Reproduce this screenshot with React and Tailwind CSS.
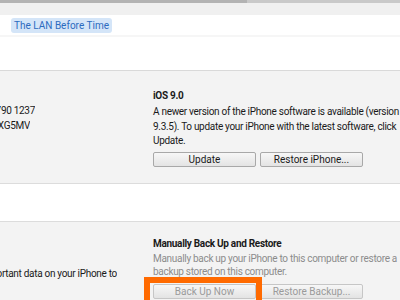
import React from "react";

const font = { fontFamily: 'Roboto, "Noto Sans", sans-serif' };

function Btn({ children, disabled }) {
  return (
    <button
      className={
        "h-[15px] w-[103px] shrink-0 rounded-[2px] border bg-gradient-to-b from-[#f7f7f7] to-[#e3e3e3] text-[10px] leading-[13px] " +
        (disabled ? "text-[#9a9a9a] border-[#c6c6c6]" : "text-[#1a1a1a] border-[#a8a8a8]")
      }
    >
      {children}
    </button>
  );
}

export default function App() {
  return (
    <div className="w-[400px] h-[300px] overflow-hidden bg-white text-[#1a1a1a] tracking-[-0.3px]" style={font}>
      <div className="flex h-[3px]">
        <div className="w-[247px] bg-[#b3b3b3]" />
        <div className="flex-1 bg-[#c9c9c9]" />
      </div>
      <div className="h-[12px] bg-[#f0f0f0]" />
      <div className="h-[20px] bg-white flex items-center pl-[11px]">
        <div className="h-[15px] w-[101px] text-center rounded-[3px] bg-[#d4e5f8] text-[#2c6bbf] text-[10px] leading-[15px] tracking-normal">
          The LAN Before Time
        </div>
      </div>
      <div className="h-[2px] bg-[#f6f6f6]" />
      <div className="h-[33px] bg-white" />

      <div className="h-[113px] border-t border-[#d9d9d9] bg-[#f3f3f3] flex">
        <div className="w-[153px] shrink-0 pt-[32px] text-[10px] leading-[15px] whitespace-nowrap">
          <div className="w-[35px] flex justify-end overflow-hidden">
            <span>6790 1237</span>
          </div>
          <div className="w-[30px] flex justify-end overflow-hidden">
            <span>DXG5MV</span>
          </div>
        </div>
        <div className="flex-1 min-w-0 pt-[17px]">
          <div className="text-[10px] leading-[15px] font-bold">iOS 9.0</div>
          <div className="mt-[2px] text-[10px] leading-[14.5px] whitespace-nowrap">
            <div>A newer version of the iPhone software is available (version</div>
            <div>9.3.5). To update your iPhone with the latest software, click</div>
            <div>Update.</div>
          </div>
          <div className="mt-[3px] flex gap-[4px] tracking-normal">
            <Btn>Update</Btn>
            <Btn>Restore iPhone...</Btn>
          </div>
        </div>
      </div>

      <div className="h-[38px] border-t border-[#dcdcdc] bg-white" />

      <div className="h-[80px] border-t border-[#dcdcdc] bg-[#f3f3f3] flex">
        <div className="w-[153px] shrink-0 pt-[44px] text-[10px] leading-[15px] whitespace-nowrap">
          <div className="w-[117px] flex justify-end overflow-hidden">
            <span>important data on your iPhone to</span>
          </div>
        </div>
        <div className="flex-1 min-w-0 pt-[14px]">
          <div className="text-[10px] leading-[15px] font-bold">Manually Back Up and Restore</div>
          <div className="mt-[1px] text-[10px] leading-[13px] text-[#8c8c8c] whitespace-nowrap">
            <div>Manually back up your iPhone to this computer or restore a</div>
            <div>backup stored on this computer.</div>
          </div>
          <div className="mt-[6px] flex items-center relative tracking-normal">
            <div className="absolute left-[-9px] top-[-7px] w-[118px] h-[30px] border-[6px] border-[#ff6a00]" />
            <Btn disabled>Back Up Now</Btn>
            <div className="w-[4px] shrink-0" />
            <Btn disabled>Restore Backup...</Btn>
          </div>
        </div>
      </div>
    </div>
  );
}
